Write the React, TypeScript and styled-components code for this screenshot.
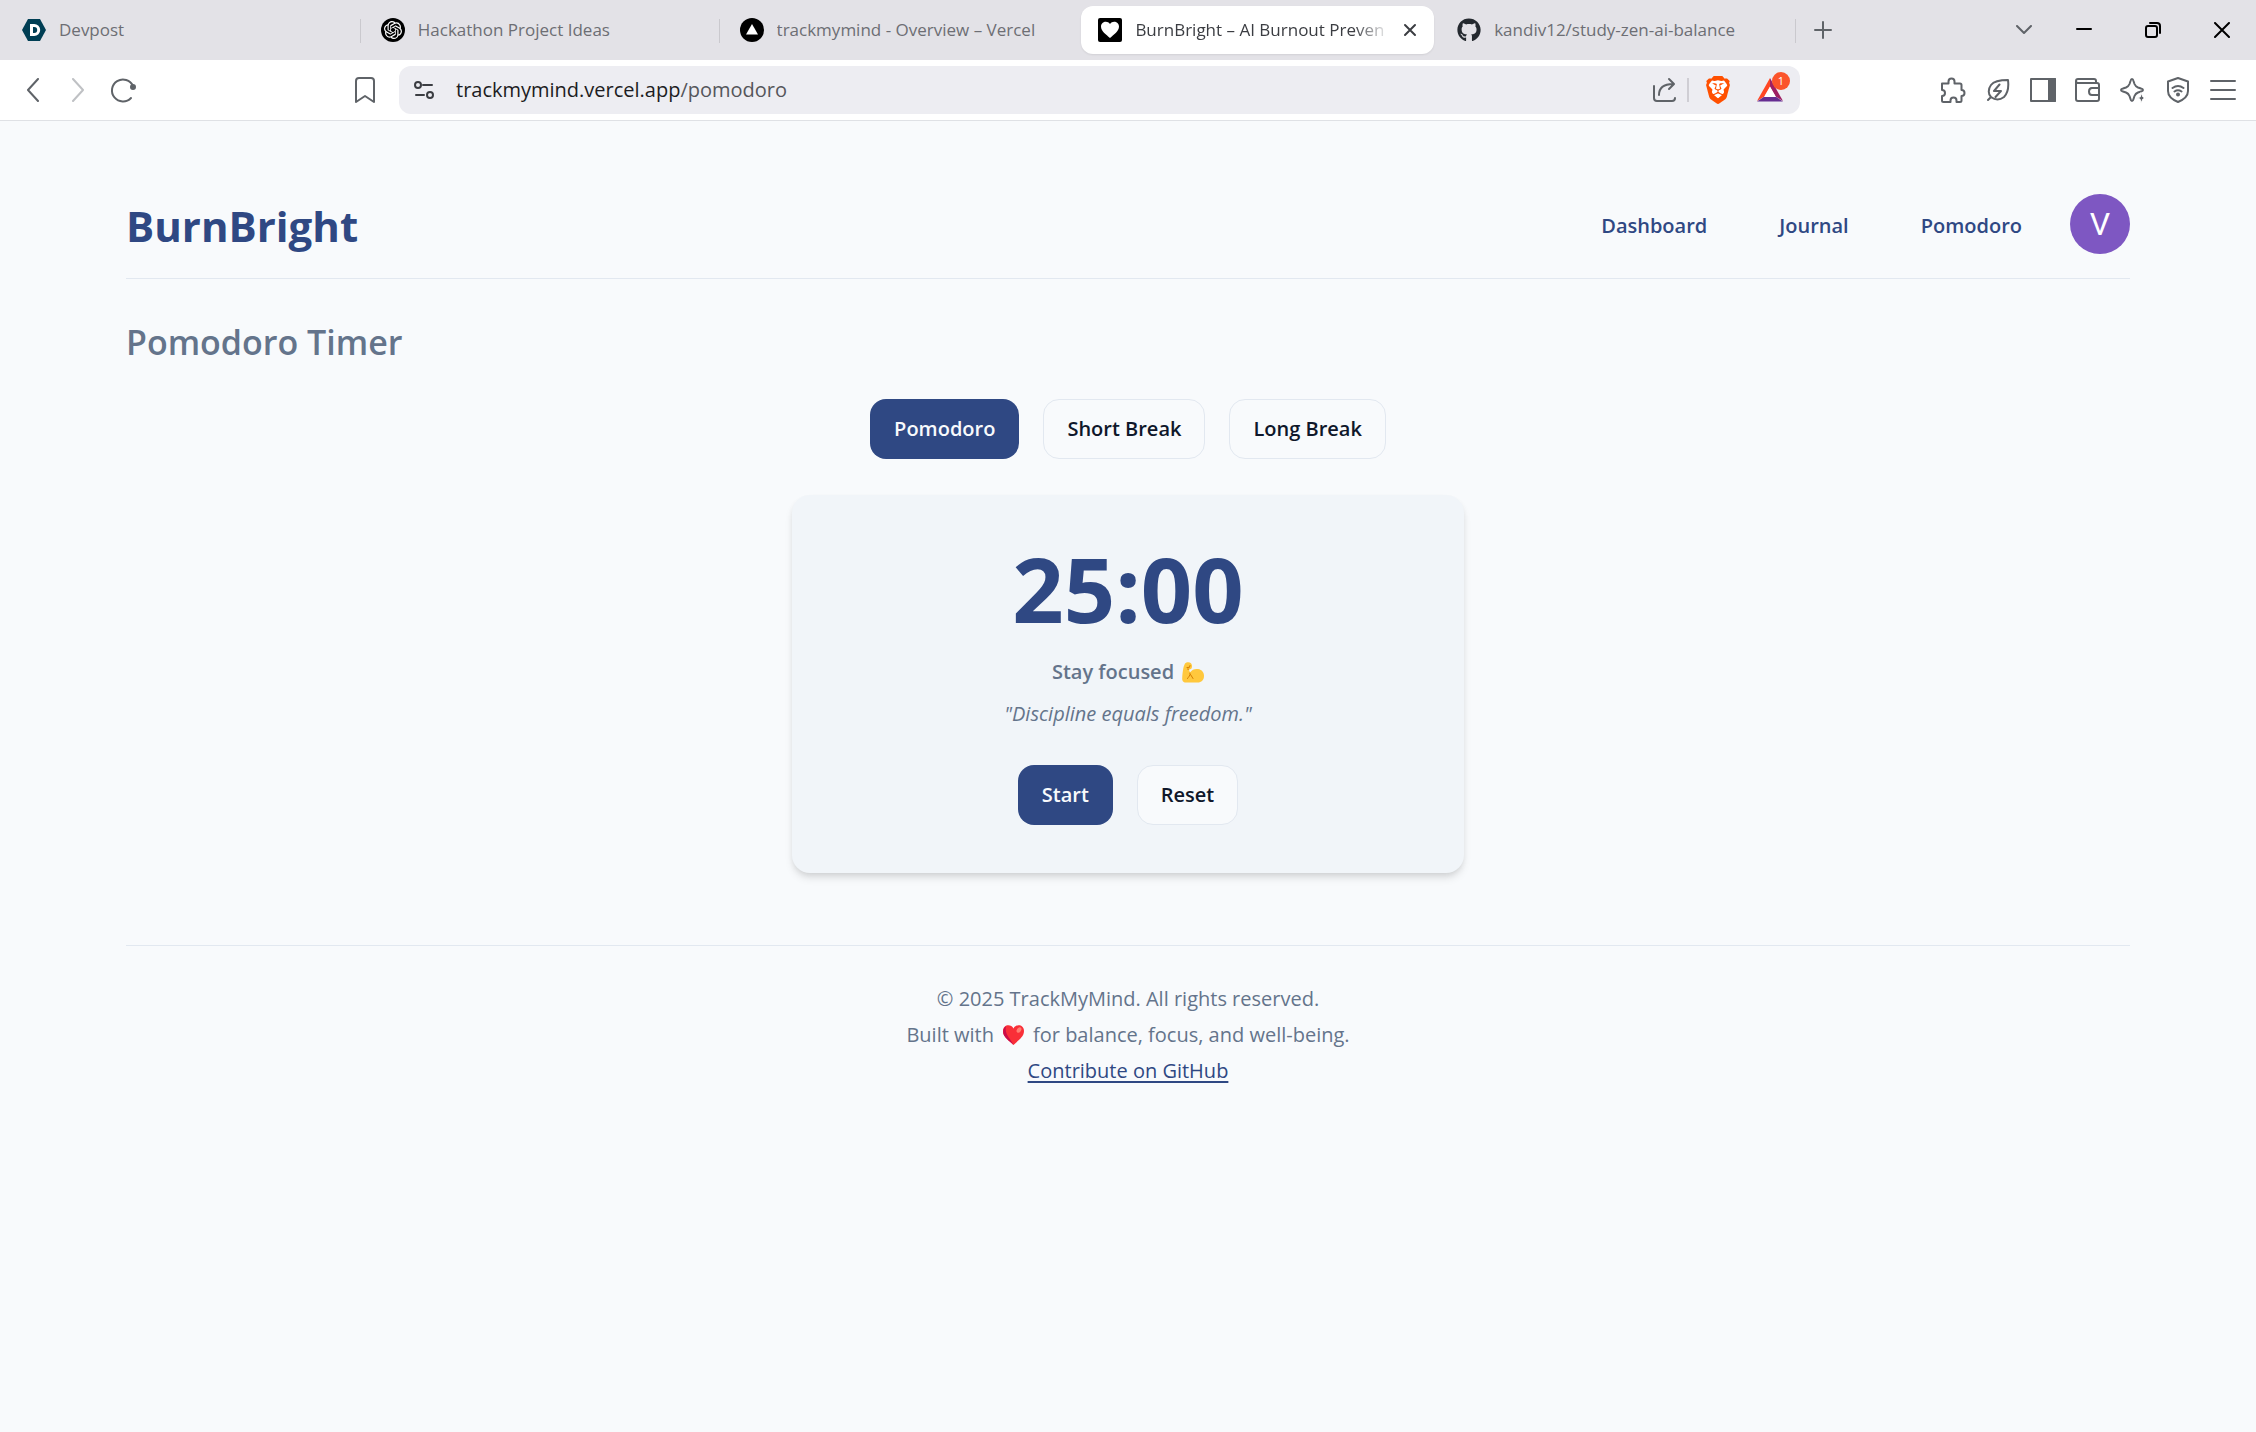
import React from "react";
import styled, { createGlobalStyle, css } from "styled-components";
import { SiBrave, SiOpenai } from "react-icons/si";
import { FaGithub } from "react-icons/fa";

const ink = "#2f4883";
const slate = "#64748b";
const line = "#e2e8f0";
const chrome = "#5f6368";

const GlobalStyle = createGlobalStyle`
  * { box-sizing: border-box; }
  body {
    margin: 0;
    background: #f8fafc;
    color: #0f172a;
    font-family: "Open Sans", "Noto Sans", sans-serif;
    font-size: 20px;
    line-height: 30px;
  }
  button, input { font: inherit; color: inherit; }
  svg { display: block; flex: none; }
`;

/* Browser chrome */

const TabStrip = styled.div`
  display: flex;
  align-items: center;
  height: 60px;
  padding-left: 2px;
  background: #e3e2e7;
`;

const Tabs = styled.div`
  display: flex;
  flex: 0 1 1794px;
  min-width: 0;
`;

const Tab = styled.div<{ $divider?: boolean }>`
  display: flex;
  flex: 1 1 0;
  align-items: center;
  min-width: 0;
  height: 48px;
  padding: 0 3px;
  position: relative;
  ${(p) =>
    p.$divider &&
    css`
      &::after {
        content: "";
        position: absolute;
        right: 0;
        top: 13px;
        width: 1px;
        height: 24px;
        background: #cac9ce;
      }
    `}
`;

const TabButton = styled.button<{ $active?: boolean }>`
  display: flex;
  flex: 1;
  align-items: center;
  gap: 13px;
  min-width: 0;
  height: 48px;
  padding: 0 17px;
  border: 0;
  border-radius: 12px;
  background: ${(p) => (p.$active ? "#fff" : "transparent")};
  box-shadow: ${(p) => (p.$active ? "0 1px 2px rgba(0, 0, 0, 0.08)" : "none")};
  color: ${(p) => (p.$active ? "#3b3d42" : "#6d6e74")};
  font-size: 17px;
  line-height: 24px;
  text-align: left;
`;

const TabTitle = styled.span<{ $fade?: boolean }>`
  flex: 1;
  min-width: 0;
  overflow: hidden;
  white-space: nowrap;
  ${(p) => p.$fade && css`mask-image: linear-gradient(90deg, #000 calc(100% - 36px), transparent);`}
`;

const IconButton = styled.button<{ $width?: number; $color?: string }>`
  display: flex;
  flex: none;
  align-items: center;
  justify-content: center;
  width: ${(p) => p.$width ?? 45}px;
  height: 48px;
  padding: 0;
  border: 0;
  background: transparent;
  color: ${(p) => p.$color ?? chrome};
`;

const WindowControls = styled.div`
  display: flex;
  margin-left: auto;
`;

const Toolbar = styled.div`
  display: flex;
  align-items: center;
  height: 61px;
  background: #fff;
  border-bottom: 1px solid #dfe1e5;
`;

const NavGroup = styled.div`
  display: flex;
  flex: none;
  justify-content: space-between;
  width: 399px;
  padding: 0 12px 0 10px;
`;

const History = styled.div`
  display: flex;
`;

const AddressBar = styled.div`
  display: flex;
  flex: 0 1 1401px;
  align-items: center;
  min-width: 0;
  height: 48px;
  padding: 0 8px 0 2px;
  border-radius: 12px;
  background: #ededf2;
`;

const UrlField = styled.div`
  flex: 1;
  min-width: 0;
  padding-left: 10px;
  color: #55565b;
  white-space: nowrap;
`;

const Host = styled.span`
  color: #1c1c22;
`;

const Divider = styled.span`
  width: 2px;
  height: 24px;
  background: #cfced4;
`;

const RewardsButton = styled(IconButton)`
  position: relative;
`;

const Badge = styled.span`
  position: absolute;
  top: 6px;
  right: 2px;
  width: 18px;
  height: 18px;
  border-radius: 9px;
  background: #fb542b;
  color: #fff;
  font-size: 11px;
  line-height: 18px;
  text-align: center;
`;

const ToolGroup = styled.div`
  display: flex;
  margin-left: auto;
  padding-right: 11px;
`;

/* Page */

const Page = styled.div`
  max-width: 2100px;
  margin: 0 auto;
  padding: 73px 48px;
`;

const Header = styled.header`
  display: flex;
  align-items: center;
  justify-content: space-between;
  padding-bottom: 24px;
  border-bottom: 1px solid ${line};
`;

const Brand = styled.h1`
  margin: 0;
  padding-top: 4px;
  color: ${ink};
  font-size: 42px;
  font-weight: 700;
  line-height: 56px;
`;

const Nav = styled.nav`
  display: flex;
  align-items: center;
  gap: 72px;
  padding-top: 4px;
`;

const NavLink = styled.a`
  color: ${ink};
  font-weight: 600;
  text-decoration: none;
`;

const Account = styled.div`
  display: flex;
  align-items: center;
  gap: 48px;
`;

const Avatar = styled.button`
  width: 60px;
  height: 60px;
  padding: 0;
  border: 0;
  border-radius: 50%;
  background: #7e57c2;
  color: #fff;
  font-family: Roboto, sans-serif;
  font-size: 32px;
  line-height: 60px;
`;

const Title = styled.h2`
  margin: 36px 0 30px;
  color: ${slate};
  font-size: 34px;
  font-weight: 600;
  line-height: 54px;
`;

const ButtonRow = styled.div`
  display: flex;
  flex-wrap: wrap;
  justify-content: center;
  gap: 24px;
`;

const Button = styled.button<{ $primary?: boolean }>`
  height: 60px;
  padding: 0 ${(p) => (p.$primary ? 24 : 23)}px;
  border: ${(p) => (p.$primary ? "0" : `1px solid ${line}`)};
  border-radius: 16px;
  background: ${(p) => (p.$primary ? ink : "#f8fafc")};
  color: ${(p) => (p.$primary ? "#f8fafc" : "#0f172a")};
  font-weight: 600;
`;

const Card = styled.section`
  max-width: 672px;
  margin: 36px auto 72px;
  padding: 48px;
  border-radius: 18px;
  background: #f1f5f9;
  box-shadow: 0 6px 9px -1px rgba(0, 0, 0, 0.1), 0 3px 6px -2px rgba(0, 0, 0, 0.1);
  text-align: center;
`;

const Clock = styled.div`
  color: ${ink};
  font-size: 90px;
  font-weight: 700;
  line-height: 90px;
`;

const Status = styled.p`
  display: flex;
  align-items: center;
  justify-content: center;
  gap: 8px;
  margin: 24px 0 12px;
  color: ${slate};
  font-weight: 600;
`;

const Quote = styled.p`
  margin: 0 0 36px;
  color: ${slate};
  font-style: italic;
`;

const Footer = styled.footer`
  padding-top: 35px;
  border-top: 1px solid ${line};
  color: ${slate};
  line-height: 36px;
  text-align: center;
`;

const FooterLine = styled.p`
  display: flex;
  align-items: center;
  justify-content: center;
  gap: 9px;
  margin: 0;
`;

const FooterLink = styled.a`
  color: ${ink};
  text-decoration: underline;
  text-decoration-thickness: 2px;
  text-underline-offset: 3px;
`;

/* Drawings */

type IconProps = { d: string; w?: number; h?: number; sw?: number; children?: React.ReactNode };

const Icon = ({ d, w = 26, h = 26, sw = 2, children }: IconProps) => (
  <svg width={w} height={h} viewBox={`0 0 ${w} ${h}`} fill="none" stroke="currentColor" strokeWidth={sw} strokeLinecap="round" strokeLinejoin="round" aria-hidden="true">
    <path d={d} />
    {children}
  </svg>
);

const DevpostLogo = () => (
  <svg width="24" height="24" viewBox="0 0 24 24" aria-hidden="true">
    <path d="M6 1h12l6 11-6 11H6L0 12z" fill="#003e54" />
    <path d="M9.500 7.500h2.700a4.500 4.500 0 0 1 0 9H9.500z" fill="none" stroke="#fff" strokeWidth="3" />
  </svg>
);

const OpenAiLogo = () => (
  <svg width="24" height="24" viewBox="0 0 24 24" aria-hidden="true">
    <circle cx="12" cy="12" r="12" fill="#000" />
    <SiOpenai x="3" y="3" size={18} color="#fff" />
  </svg>
);

const VercelLogo = () => (
  <svg width="24" height="24" viewBox="0 0 24 24" aria-hidden="true">
    <circle cx="12" cy="12" r="12" fill="#000" />
    <path d="M12 6l6 10.500H6z" fill="#fff" />
  </svg>
);

const HeartLogo = () => (
  <svg width="24" height="24" viewBox="0 0 24 24" aria-hidden="true">
    <rect width="24" height="24" rx="2" fill="#000" />
    <path d="M12 20C8 16.500 3 13 3 8.500 3 3.500 9.500 2 12 6c2.500-4 9-2.500 9 2.500 0 4.500-5 8-9 11.500z" fill="#fff" />
  </svg>
);

const BraveLogo = () => (
  <svg width="28" height="28" viewBox="0 0 24 24" aria-hidden="true">
    <path d="M7 4h10l3 4-2 9-6 5-6-5-2-9z" fill="#fff" />
    <SiBrave size={24} color="#ff5000" />
  </svg>
);

const RewardsLogo = () => (
  <svg width="26" height="24" viewBox="0 0 26 24" aria-hidden="true">
    <path d="M13 0L0 23l7.500-4.500L13 9z" fill="#ff4724" />
    <path d="M13 0l13 23-7.500-4.500L13 9z" fill="#9e1f63" />
    <path d="M0 23.500h26l-7.500-5h-11z" fill="#662d91" />
    <path d="M13 8.500l6 10.500H7z" fill="#fff" />
  </svg>
);

const FlexedArm = () => (
  <svg width="22" height="21" viewBox="0 0 22 21" role="img" aria-label="flexed biceps">
    <path d="M3 1.500C4.500 0 7.500 0 9 1.200c1.200 1.300 1.300 3.600.600 5C9 7.300 8 7.300 6.800 7.200L8 10.500C10 7.500 13 6.500 16 7c4 .7 6 3.500 6 7 0 4-2.500 6.500-6.500 6.500H4C1 20.500 0 18.500.2 16 .6 11 1 5 3 1.500z" fill="#ffc83d" />
    <path d="M5 5.500l2.500-.2L8 3.500M5.500 7l1.300.200M8 11c.5 3-1.500 3.500-2.500 5.500M8.500 12.500l2.500 4" fill="none" stroke="#d67d00" strokeLinecap="round" />
  </svg>
);

const Heart = () => (
  <svg width="21" height="20" viewBox="0 0 21 20" role="img" aria-label="love">
    <path d="M10.500 3.500C8-1.500 0-.5 0 6c0 6 6 9.500 10.500 14C15 15.500 21 12 21 6c0-6.500-8-7.500-10.500-2.500z" fill="#f92f38" />
    <path d="M3 1.200C0 3-.5 7 .8 10c2 4 6.500 6.500 9.700 10C8 14 1 9 3 1.200z" fill="#ca0b4a" />
    <ellipse cx="16" cy="5" rx="2" ry="3" transform="rotate(35 16 5)" fill="#ff7e72" />
  </svg>
);

const openTabs = [
  { title: "Devpost", logo: <DevpostLogo />, divider: true },
  { title: "Hackathon Project Ideas", logo: <OpenAiLogo />, divider: true },
  { title: "trackmymind - Overview – Vercel", logo: <VercelLogo /> },
  { title: "BurnBright – AI Burnout Preven", logo: <HeartLogo />, active: true },
  { title: "kandiv12/study-zen-ai-balance", logo: <FaGithub size={24} color="#24292f" />, divider: true },
];

const tools = [
  { label: "Extensions", icon: <Icon d="M2 6.500h6.500V4.500a3 3 0 0 1 6 0v2H20q1.500 0 1.500 1.500v5a3 3 0 0 1 0 6V23.500q0 1.500-1.500 1.500h-3.500v-1.500a3 3 0 0 0-6 0V25H3.500Q2 25 2 23.500V19a3 3 0 0 0 0-6z" /> },
  { label: "Energy saver", icon: <Icon d="M3 23l3-3c-3-3-3-8 0-12 3-4 9-5 17-5 1 8-1 14-4 17-4 3-9 3-13 0M14.500 7.500L9 14h7l-5.500 6" /> },
  { label: "Sidebar", icon: <Icon d="M1 2h24v22H1z"><path d="M19 2h6v22h-6z" fill="currentColor" /></Icon> },
  { label: "Wallet", icon: <Icon d="M1 4v18q0 2 2 2h19q2 0 2-2V8q0-2-2-2H3Q1 6 1 4t2-2h16q2 0 2 2v2M24 11h-7q-3 0-3 3.500t3 3.500h7" /> },
  { label: "Leo", icon: <Icon d="M12 2q1 0 1.500 2l1 3q1 2.500 3.500 3.500l3 1q2 .5 2 1.500t-2 1.500l-3 1q-2.500 1-3.500 3.500l-1 3q-.5 2-1.500 2t-1.500-2l-1-3Q8.500 16.500 6 15.500l-3-1q-2-.5-2-1.500t2-1.500l3-1Q8.500 9.500 9.500 7l1-3Q11 2 12 2z"><path d="M21 16l2 4 3 1-3 1-2 4-1-4-4-1 4-1z" fill="currentColor" stroke="#fff" strokeWidth="1" /></Icon> },
  { label: "VPN", icon: <Icon d="M13 1l10 3.500V14c0 5-4 8.500-10 11C7 22.500 3 19 3 14V4.500zM7.500 11q5.500-4 11 0M9.500 14.500q3.500-2.500 7 0"><circle cx="13" cy="17.500" r="1" fill="currentColor" /></Icon> },
  { label: "Menu", icon: <Icon d="M1 4h24M1 13h24M1 22h24" /> },
];

export default function App() {
  return (
    <>
      <GlobalStyle />
      <TabStrip>
        <Tabs>
          {openTabs.map((t) => (
            <Tab key={t.title} $divider={t.divider}>
              <TabButton $active={t.active}>
                {t.logo}
                <TabTitle $fade={t.active}>{t.title}</TabTitle>
                {t.active && <Icon w={14} h={14} d="M2 2l10 10M12 2L2 12" />}
              </TabButton>
            </Tab>
          ))}
        </Tabs>
        <IconButton $width={54} aria-label="New tab"><Icon w={18} h={18} d="M9 1v16M1 9h16" /></IconButton>
        <WindowControls>
          <IconButton $width={50} aria-label="Search tabs"><Icon w={16} h={10} d="M1 1l7 7 7-7" /></IconButton>
          <IconButton $width={69} $color="#000" aria-label="Minimize"><Icon w={16} h={16} d="M1 7h14" /></IconButton>
          <IconButton $width={69} $color="#000" aria-label="Restore"><Icon w={16} h={16} d="M3 4h7q2 0 2 2v7q0 2-2 2H3q-2 0-2-2V6q0-2 2-2zM5 1h7q3 0 3 3v7" /></IconButton>
          <IconButton $width={69} $color="#000" aria-label="Close"><Icon w={16} h={16} d="M1 1l14 14M15 1L1 15" /></IconButton>
        </WindowControls>
      </TabStrip>

      <Toolbar>
        <NavGroup>
          <History>
            <IconButton aria-label="Back"><Icon w={14} h={24} d="M12 1L2 12l10 11" /></IconButton>
            <IconButton aria-label="Forward" $color="#bfc1c4"><Icon w={14} h={24} d="M2 1l10 11L2 23" /></IconButton>
            <IconButton aria-label="Reload"><Icon d="M21 21A11 11 0 1 1 23 9"><circle cx="23" cy="10" r="2" fill="currentColor" /></Icon></IconButton>
          </History>
          <IconButton aria-label="Bookmark"><Icon w={20} h={26} d="M1 25V4q0-3 3-3h12q3 0 3 3v21l-9-6z" /></IconButton>
        </NavGroup>
        <AddressBar>
          <IconButton $color="#3b3d42" aria-label="Site information">
            <Icon w={20} h={18} d="M9 4h9M2 14h8"><circle cx="4" cy="4" r="3" /><circle cx="16" cy="14" r="3" /></Icon>
          </IconButton>
          <UrlField><Host>trackmymind.vercel.app</Host>/pomodoro</UrlField>
          <IconButton aria-label="Share"><Icon w={26} h={26} d="M2 9v12q0 3 3 3h15q3 0 3-3M7 18C7 11 12 7 21 7M17 2l5 5-5 5" /></IconButton>
          <Divider />
          <IconButton $width={58} aria-label="Brave Shields"><BraveLogo /></IconButton>
          <RewardsButton aria-label="Brave Rewards"><RewardsLogo /><Badge>1</Badge></RewardsButton>
        </AddressBar>
        <ToolGroup>
          {tools.map((t) => (
            <IconButton key={t.label} aria-label={t.label}>{t.icon}</IconButton>
          ))}
        </ToolGroup>
      </Toolbar>

      <Page>
        <Header>
          <Brand>BurnBright</Brand>
          <Account>
            <Nav>
              <NavLink href="#dashboard">Dashboard</NavLink>
              <NavLink href="#journal">Journal</NavLink>
              <NavLink href="#pomodoro">Pomodoro</NavLink>
            </Nav>
            <Avatar aria-label="Account">V</Avatar>
          </Account>
        </Header>
        <main>
          <Title>Pomodoro Timer</Title>
          <ButtonRow>
            <Button $primary>Pomodoro</Button>
            <Button>Short Break</Button>
            <Button>Long Break</Button>
          </ButtonRow>
          <Card>
            <Clock>25:00</Clock>
            <Status>Stay focused <FlexedArm /></Status>
            <Quote>"Discipline equals freedom."</Quote>
            <ButtonRow>
              <Button $primary>Start</Button>
              <Button>Reset</Button>
            </ButtonRow>
          </Card>
        </main>
        <Footer>
          <FooterLine>© 2025 TrackMyMind. All rights reserved.</FooterLine>
          <FooterLine>Built with <Heart /> for balance, focus, and well-being.</FooterLine>
          <FooterLine><FooterLink href="#github">Contribute on GitHub</FooterLink></FooterLine>
        </Footer>
      </Page>
    </>
  );
}
